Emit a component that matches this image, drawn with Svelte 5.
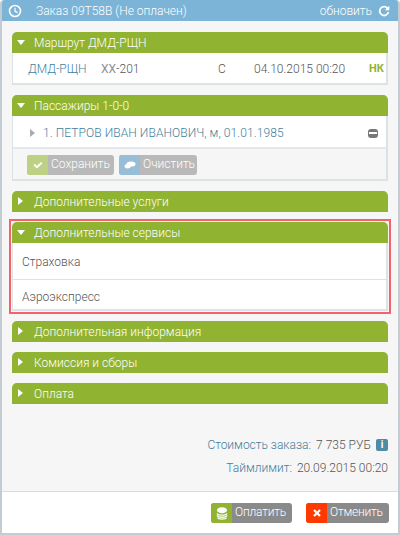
<script>
  const closed = ['Дополнительная информация', 'Комиссия и сборы', 'Оплата'];
</script>

<div class="win">
  <header class="top">
    <svg class="clock" viewBox="0 0 14 14" width="14" height="14"><circle cx="7" cy="7" r="5.5" fill="none" stroke="#fff" stroke-width="1.6"/><path d="M7 3.8V7.4L9.6 8.6" fill="none" stroke="#fff" stroke-width="1.2"/></svg>
    <span class="title">Заказ 09T58B (Не оплачен)</span>
    <span class="refresh">обновить</span>
    <svg class="reload" viewBox="0 0 12 12" width="12" height="12"><path d="M9.6 3.4A4.4 4.4 0 1 0 10.4 7" fill="none" stroke="#fff" stroke-width="1.8"/><path d="M11.3 0.8V5.2H6.9Z" fill="#fff"/></svg>
  </header>

  <main class="content">
    <section class="panel">
      <h3 class="head"><i class="down"></i>Маршрут ДМД-РЩН</h3>
      <div class="route">
        <a class="link">ДМД-РЩН</a>
        <span class="flight"><span class="xx">ХХ</span>-201</span>
        <span>С</span>
        <span>04.10.2015 00:20</span>
        <b class="nk">НК</b>
      </div>
    </section>

    <section class="panel">
      <h3 class="head"><i class="down"></i>Пассажиры 1-0-0</h3>
      <div class="pax">
        <i class="small-right"></i>
        <a class="link wide">1. ПЕТРОВ ИВАН ИВАНОВИЧ, м, 01.01.1985</a>
        <span class="minus"><i></i></span>
      </div>
      <div class="actions">
        <button class="btn faded save"><span class="ic green-l"><svg viewBox="0 0 10 8" width="10" height="8"><path d="M1.2 3.6L4 6.2L8.8 1.6" fill="none" stroke="#fff" stroke-width="2"/></svg></span><span class="lbl">Сохранить</span></button>
        <button class="btn faded clear"><span class="ic blue-l"><svg viewBox="0 0 12 8" width="12" height="8"><ellipse cx="7" cy="3" rx="4.5" ry="2.6" fill="#fff"/><ellipse cx="3.6" cy="5.2" rx="3" ry="2.2" fill="#fff"/></svg></span><span class="lbl">Очистить</span></button>
      </div>
    </section>

    <section class="panel">
      <h3 class="head"><i class="right"></i>Дополнительные услуги</h3>
    </section>

    <div class="hl">
      <section class="panel">
        <h3 class="head"><i class="down"></i>Дополнительные сервисы</h3>
        <div class="svc first">Страховка</div>
        <div class="svc second">Аэроэкспресс</div>
      </section>
    </div>

    {#each closed as c}
      <section class="panel">
        <h3 class="head"><i class="right"></i>{c}</h3>
      </section>
    {/each}

    <div class="totals">
      <div class="line"><span class="k">Стоимость заказа:</span><span class="v">7 735 РУБ</span><span class="info">i</span></div>
      <div class="line"><span class="k">Таймлимит:</span><span class="v">20.09.2015 00:20</span></div>
    </div>
  </main>

  <footer class="foot">
    <button class="btn pay"><span class="ic green"><svg viewBox="0 0 12 13" width="12" height="13"><ellipse cx="6" cy="3.2" rx="5" ry="3" fill="#fff"/><path d="M1 6.4c1 2.2 9 2.2 10 0M1 8.6c1 2.2 9 2.2 10 0M1.6 10.8c1 1.8 7.8 1.8 8.8 0" fill="none" stroke="#fff" stroke-width="1.3"/></svg></span><span class="lbl">Оплатить</span></button>
    <button class="btn cancel"><span class="ic red"><svg viewBox="0 0 8 8" width="8" height="8"><path d="M1 1L7 7M7 1L1 7" stroke="#fff" stroke-width="2.2"/></svg></span><span class="lbl">Отменить</span></button>
  </footer>
</div>

<style>
  :global(body) { margin: 0; background: #fff; }
  .win {
    width: 400px; height: 535px; box-sizing: border-box;
    border: solid #c3ccd3; border-width: 0 2px 2px 2px;
    border-radius: 4px 4px 0 0;
    background: #f6f6f6;
    display: flex; flex-direction: column;
    font: 300 12px/14px Roboto, "Liberation Sans", sans-serif;
    color: #555;
    overflow: hidden;
  }
  .top {
    height: 21px; margin: 0 -2px; flex: none;
    background: #7bb4d7; color: #fff;
    border-radius: 4px 4px 0 0;
    display: flex; align-items: center;
    padding: 0 10px 0 8px;
  }
  .clock { flex: none; }
  .title { margin-left: 14px; }
  .refresh { margin-left: auto; }
  .reload { margin-left: 6px; }

  .content { flex: 1; padding: 11px 10px 0; display: flex; flex-direction: column; gap: 10px; min-height: 0; }
  .panel { background: #fff; border-radius: 5px 5px 0 0; border: solid #dce3e7; border-width: 0 2px 2px 1px; }
  .head {
    margin: 0 -2px -2px -1px; height: 21px; box-sizing: border-box;
    background: #91b332; color: #fff; font: inherit;
    border-radius: 5px 5px 0 0;
    display: flex; align-items: center;
    padding-left: 22px; position: relative;
  }
  .down, .right { position: absolute; width: 0; height: 0; }
  .down { left: 5px; top: 8px; border: solid transparent; border-width: 5px 4.5px 0; border-top-color: #fff; }
  .right { left: 6px; top: 6px; border: solid transparent; border-width: 4.5px 0 4.5px 5px; border-left-color: #fff; }

  .route {
    height: 32px; box-sizing: border-box; padding: 4px 0 0 15px;
    display: grid; grid-template-columns: 73px 117px 36px 115px auto; align-items: center;
  }
  .link { color: #3f7f9c; }
  .wide { letter-spacing: .08px; }
  .xx { color: #8c8f98; font-weight: 400; }
  .nk { color: #91b332; font-size: 11px; font-weight: 700; }

  .pax { height: 35px; box-sizing: border-box; padding-top: 5px; display: flex; align-items: center; border-bottom: 2px solid #e2e8ec; }
  .small-right { margin-left: 17px; width: 0; height: 0; border: solid transparent; border-width: 4.5px 0 4.5px 5px; border-left-color: #aaa; margin-right: 8px; }
  .minus { margin-left: auto; margin-right: 8px; width: 10px; height: 9px; background: #777; border-radius: 3px; display: flex; align-items: center; justify-content: center; }
  .minus i { width: 8px; height: 2px; background: #fff; }
  .actions { background: #f6f6f6; padding: 6px 14px 4px; display: flex; gap: 5px; }

  .btn {
    padding: 0; border: 0; height: 20px; display: inline-flex; align-items: stretch;
    background: #8a8a8a; color: #fff; border-radius: 3px; overflow: hidden;
    font: inherit;
  }
  .save { width: 87px; }
  .clear { width: 78px; }
  .pay { width: 81px; }
  .cancel { width: 83px; }
  .ic { width: 21px; flex: none; display: flex; align-items: center; justify-content: center; }
  .lbl { flex: 1; text-align: left; padding-left: 3px; line-height: 19px; }
  .foot .lbl { letter-spacing: -.2px; }
  .faded { background: #b9b9b9; }
  .green-l { background: #bdd184; }
  .blue-l { background: #98bdd6; }
  .green { background: #91b332; }
  .red { background: #ff3a00; }

  .hl { margin: -3px; padding: 1px; border: 2px solid #f2636b; }
  .svc { padding-left: 9px; display: flex; align-items: center; box-sizing: border-box; }
  .svc.first { height: 39px; padding-top: 3px; border-bottom: 1px solid #dce3e7; }
  .svc.second { height: 29px; padding-top: 4px; }

  .totals { margin-top: 24px; display: flex; flex-direction: column; gap: 9px; align-items: flex-end; }
  .line { display: flex; align-items: center; height: 14px; }
  .k { color: #3f7f9c; }
  .v { margin-left: 5px; }
  .info { margin-left: 5px; width: 12px; height: 12px; background: #4d8ba6; color: #fff; font-weight: bold; font-size: 10px; line-height: 12px; text-align: center; border-radius: 2px; }

  .foot {
    height: 42px; flex: none; background: #fff; border-top: 1px solid #d5dde2;
    display: flex; justify-content: flex-end; align-items: flex-start; gap: 14px;
    padding: 11px 9px 0 0; box-sizing: border-box;
  }
</style>
